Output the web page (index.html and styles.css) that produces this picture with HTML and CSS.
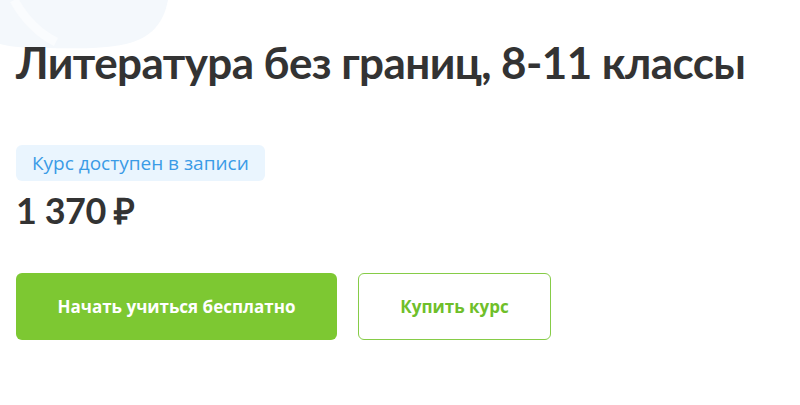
FILE: index.html
```html
<!DOCTYPE html>
<html lang="ru">
<head>
<meta charset="utf-8">
<link rel="stylesheet" href="styles.css">
</head>
<body>
<div class="page">
  <svg class="decor" width="220" height="60" viewBox="0 0 220 60" aria-hidden="true">
    <path d="M0 0 H168 C164 22 152 38 126 44 C98 50 66 48 40 48 C20 48 8 46 0 44 Z" fill="#f4f8fc"/>
    <path d="M14 0 C24 18 36 32 56 42" stroke="#fafcfe" stroke-width="9" fill="none"/>
  </svg>
  <h1 class="title">Литература без границ, 8-11 классы</h1>
  <div class="badge">Курс доступен в записи</div>
  <div class="price">1 370 ₽</div>
  <div class="actions">
    <button class="btn btn-primary">Начать учиться бесплатно</button>
    <button class="btn btn-outline">Купить курс</button>
  </div>
</div>
</body>
</html>
```
FILE: styles.css
```css
html, body {
  margin: 0;
  padding: 0;
  background: #ffffff;
}
body {
  font-family: "Open Sans", "Liberation Sans", sans-serif;
  color: #333333;
}
.page {
  position: relative;
  padding: 0 16px;
  width: 800px;
  height: 405px;
  box-sizing: border-box;
  overflow: hidden;
}
.decor {
  position: absolute;
  left: 0;
  top: 0;
  z-index: 0;
}
.title {
  position: relative;
  margin: 36px 0 0;
  font-family: "Lato", "Open Sans", sans-serif;
  font-size: 44px;
  line-height: 52.8px;
  letter-spacing: -0.6px;
  font-weight: 700;
  color: #333333;
  white-space: nowrap;
}
.badge {
  display: inline-flex;
  align-items: center;
  margin-top: 56px;
  height: 36px;
  padding: 0 16px;
  border-radius: 6px;
  background: #eaf5fe;
  color: #3a9be6;
  font-size: 19px;
}
.price {
  margin-top: 8px;
  font-family: "Lato", "Open Sans", sans-serif;
  font-size: 36px;
  line-height: 43.2px;
  letter-spacing: -0.5px;
  font-weight: 700;
  color: #333333;
}
.actions {
  display: flex;
  gap: 21px;
  margin-top: 41px;
}
.btn {
  height: 67px;
  border-radius: 6px;
  font-family: inherit;
  font-size: 17px;
  font-weight: 700;
  cursor: pointer;
  box-sizing: border-box;
}
.btn-primary {
  width: 321px;
  border: none;
  background: #7dc832;
  color: #ffffff;
}
.btn-outline {
  width: 193px;
  border: 1.5px solid #86cc47;
  background: #ffffff;
  color: #6fbf2a;
}
```
